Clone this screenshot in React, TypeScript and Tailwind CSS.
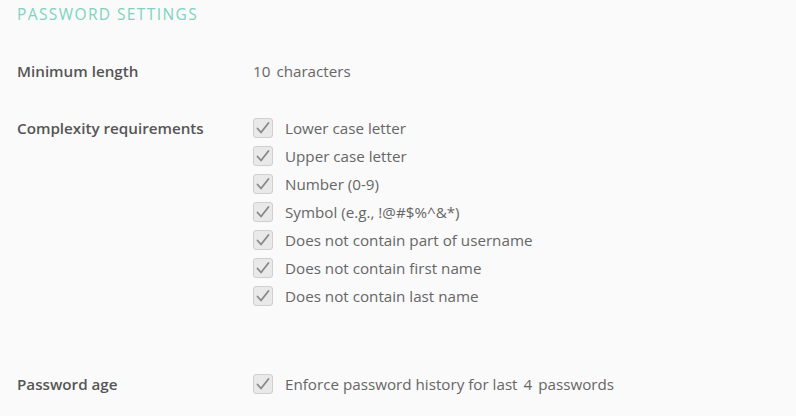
import React from 'react';

const complexity = [
  'Lower case letter',
  'Upper case letter',
  'Number (0-9)',
  'Symbol (e.g., !@#$%^&*)',
  'Does not contain part of username',
  'Does not contain first name',
  'Does not contain last name',
];

const CheckBox: React.FC = () => (
  <span className="flex h-5 w-5 flex-shrink-0 items-center justify-center rounded-[3px] border border-[#cfcfcf] bg-[#e9e9e9]">
    <svg className="h-4 w-4" viewBox="0 0 16 16" fill="none" stroke="#888" strokeWidth={1.8} strokeLinecap="round" strokeLinejoin="round">
      <path d="M2.5 8.5l3.5 4 7.5-9.5" />
    </svg>
  </span>
);

const CheckRow: React.FC<{ children: React.ReactNode }> = ({ children }) => (
  <div className="flex h-7 items-center">
    <CheckBox />
    <span className="ml-3 text-[#666]">{children}</span>
  </div>
);

const App: React.FC = () => {
  return (
    <div className="min-h-screen bg-[#fafafa] pl-[17px] pt-1 text-[15.2px] font-['Open_Sans',sans-serif]">
      {/* Header */}
      <h2 className="h-5 leading-5 text-[15.5px] tracking-[1.4px] text-[#7dd3bd]">PASSWORD SETTINGS</h2>

      {/* Minimum length */}
      <div className="mt-[33px] flex h-7 items-center">
        <div className="w-[236px] font-semibold text-[#555]">Minimum length</div>
        <div className="text-[#666]">
          10<span className="ml-[6px]">characters</span>
        </div>
      </div>

      {/* Complexity */}
      <div className="mt-[29px] flex">
        <div className="flex h-7 w-[236px] items-center font-semibold text-[#555]">Complexity requirements</div>
        <div>
          {complexity.map((item) => (
            <CheckRow key={item}>{item}</CheckRow>
          ))}
        </div>
      </div>

      {/* Password age */}
      <div className="mt-[60px] flex">
        <div className="flex h-7 w-[236px] items-center font-semibold text-[#555]">Password age</div>
        <CheckRow>
          Enforce password history for last<span className="mx-[6px]">4</span>passwords
        </CheckRow>
      </div>
    </div>
  );
};

export default App;
